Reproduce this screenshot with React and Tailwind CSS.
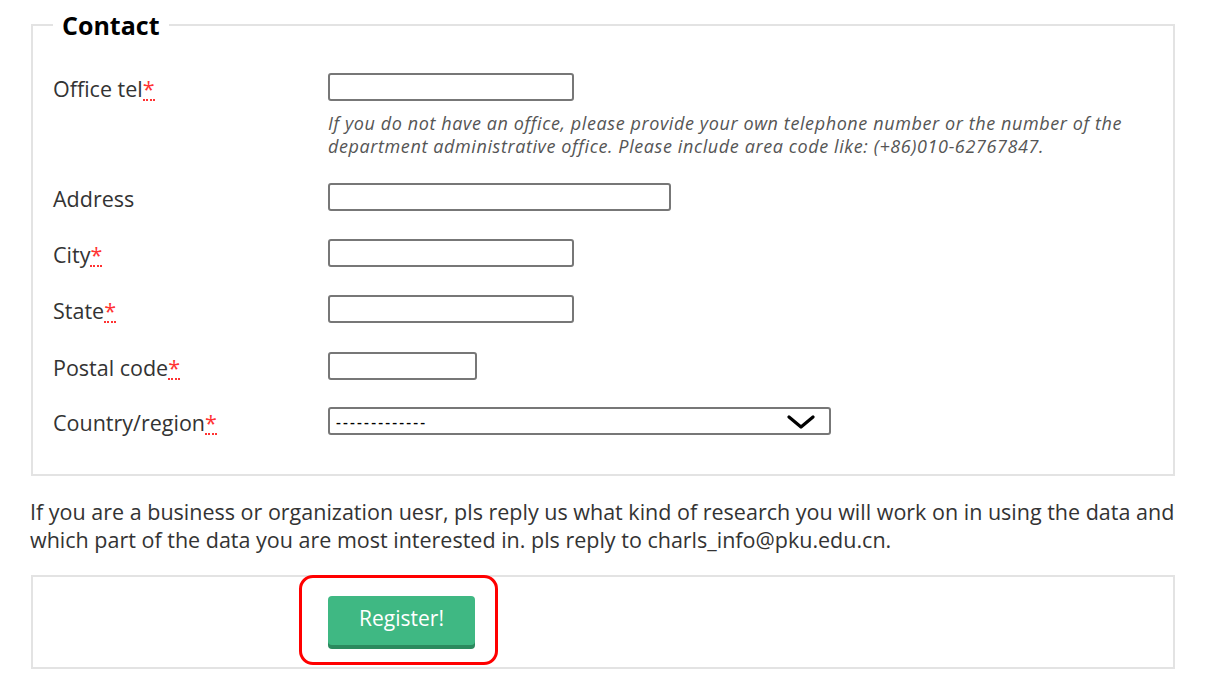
function Req() {
  return (
    <abbr
      title="required"
      className="text-[#ff3333] no-underline border-b-2 border-dotted border-[#ff3333] leading-none"
    >
      *
    </abbr>
  );
}

function Row({ label, required, children, className = "" }) {
  return (
    <div className={`flex items-start ${className}`}>
      <label className="w-[275px] shrink-0 h-[28px] pt-[5px] flex items-center text-[21.5px] text-[#333]">
        {label}
        {required && <Req />}
      </label>
      <div className="flex flex-col">{children}</div>
    </div>
  );
}

function TextBox({ width }) {
  return (
    <input
      type="text"
      className="h-[28px] border-2 border-[#777] rounded-[3px] bg-white px-1 outline-none"
      style={{ width }}
    />
  );
}

export default function App() {
  return (
    <div
      className="w-[1211px] h-[698px] bg-white overflow-hidden pl-[30px] pr-[36px]"
      style={{ fontFamily: '"Open Sans", "Noto Sans", sans-serif' }}
    >
      <fieldset className="mt-[6px] border-2 border-[#e3e3e3] pl-[20px] pr-4 pt-[30px] pb-[38px] ml-px h-[470px]">
        <legend className="ml-0 px-[9px] text-[25px] font-bold text-black leading-[38px]">
          Contact
        </legend>

        <div className="flex flex-col -mt-px">
          <Row label="Office tel" required>
            <TextBox width={246} />
            <p className="mt-[11px] text-[18px] tracking-[0.6px] italic text-[#555] leading-[23px] whitespace-nowrap">
              If you do not have an office, please provide your own telephone number or the number of the
              <br />
              department administrative office. Please include area code like: (+86)010-62767847.
            </p>
          </Row>

          <Row label="Address" className="mt-[25px]">
            <TextBox width={343} />
          </Row>

          <Row label="City" required className="mt-[28px]">
            <TextBox width={246} />
          </Row>

          <Row label="State" required className="mt-[28px]">
            <TextBox width={246} />
          </Row>

          <Row label="Postal code" required className="mt-[29px]">
            <TextBox width={149} />
          </Row>

          <Row label="Country/region" required className="mt-[27px]">
            <div className="relative w-[503px] h-[28px] border-2 border-[#777] rounded-[3px] bg-white flex items-center pl-[6px] text-[15px] font-semibold tracking-[2.2px] text-black">
              -------------
              <svg
                className="absolute right-[14px] top-[6px]"
                width="28"
                height="14"
                viewBox="0 0 28 14"
                fill="none"
                stroke="#000"
                strokeWidth="3.2"
                strokeLinecap="round"
                strokeLinejoin="round"
              >
                <path d="M2 2 L14 12 L26 2" />
              </svg>
            </div>
          </Row>
        </div>
      </fieldset>

      <p className="mt-[22px] text-[21.5px] leading-[28px] text-[#333]">
        If you are a business or organization uesr, pls reply us what kind of research you will work on in
        using the data and which part of the data you are most interested in. pls reply to
        charls_info@pku.edu.cn.
      </p>

      <div className="relative mt-[21px] ml-px h-[94px] border-2 border-[#e3e3e3] pl-[295px] pt-[19px]">
        <button className="w-[147px] h-[49px] rounded-[4px] bg-[#3fb883] text-white text-[21px] font-medium shadow-[0_4px_0_#2b8a5e] pb-[3px]">
          Register!
        </button>
        <div className="absolute left-[266px] -top-[2px] w-[199px] h-[90px] border-[3px] border-[#ff0000] rounded-[14px] pointer-events-none" />
      </div>
    </div>
  );
}
